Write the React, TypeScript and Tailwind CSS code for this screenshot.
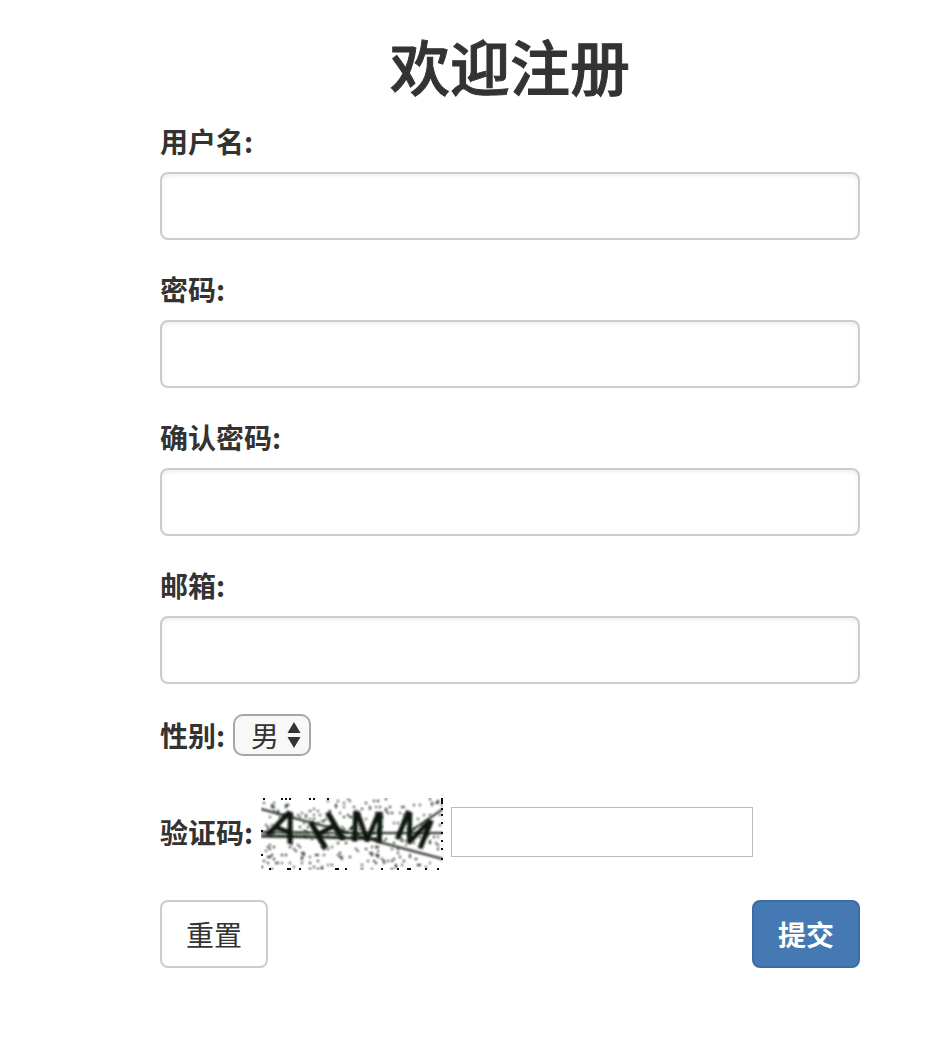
import React from "react";

interface FieldProps {
  id: string;
  label: string;
  type: string;
}

const Field: React.FC<FieldProps> = ({ id, label, type }) => {
  return (
    <div className="mb-[30px]">
      <label htmlFor={id} className="block mb-3 leading-[38px] font-bold">
        {label}
      </label>
      <input
        id={id}
        name={id}
        type={type}
        className="block w-full h-[68px] px-6 rounded-lg border-2 border-[#ccc] bg-white shadow-[inset_0_2px_4px_rgba(0,0,0,0.075)] outline-none focus:border-[#66afe9]"
      />
    </div>
  );
};

// fixed seed, so the speckles stay the same on every render
const makeSpeckles = (count: number) => {
  let seed = 4711;
  const next = () => {
    seed = (seed * 16807) % 2147483647;
    return seed / 2147483647;
  };
  return Array.from({ length: count }, () => ({
    x: Math.floor(next() * 91) * 2,
    y: Math.floor(next() * 36) * 2,
    opacity: 0.7 + next() * 0.3,
  }));
};

const speckles = makeSpeckles(270);
const topEdge = [2, 20, 24, 28, 48, 52, 66];
const bottomEdge = [8, 26, 28, 38, 74, 76, 84, 120, 136, 146, 148, 164, 176];
const rightEdge = [0, 2, 4, 10, 16, 24, 34, 42, 50, 60];

const Captcha = () => {
  return (
    <svg
      viewBox="0 0 182 72"
      className="w-[182px] h-[72px] shrink-0"
      role="img"
      aria-label="验证码"
    >
      <defs>
        <filter id="soft">
          <feGaussianBlur stdDeviation="0.8" />
        </filter>
        <filter id="softer">
          <feGaussianBlur stdDeviation="1.2" />
        </filter>
      </defs>
      <rect width="182" height="72" fill="#fff" />
      <g filter="url(#soft)" fill="#101a10">
        {speckles.map((s, i) => (
          <rect key={i} x={s.x} y={s.y} width="2" height="2" opacity={s.opacity} />
        ))}
      </g>
      <g filter="url(#soft)" stroke="#1c281c" fill="none">
        <path d="M0 11 L44 23 L90 35 L118 44 L182 61" strokeWidth="2" />
        <path d="M0 34 L80 35 L182 35" strokeWidth="2" />
        <path d="M0 38 L60 39 L118 41" strokeWidth="3" />
        <path d="M148 34 L166 22 L182 11" strokeWidth="2" />
      </g>
      <g
        filter="url(#softer)"
        className="font-['Liberation_Sans',sans-serif] text-[42px]"
        fill="#0c160c"
        stroke="#0c160c"
        strokeWidth="1.5"
        textAnchor="middle"
      >
        <text transform="translate(18 41) rotate(22)">A</text>
        <text transform="translate(73 45) rotate(-30)">H</text>
        <text transform="translate(106 43) rotate(2)">M</text>
        <text transform="translate(148 45) rotate(22)">M</text>
      </g>
      <g fill="#0a0f0a">
        {topEdge.map((x) => (
          <rect key={x} x={x} y="0" width="2" height="2" />
        ))}
        {bottomEdge.map((x) => (
          <rect key={x} x={x} y="70" width="2" height="2" />
        ))}
        {rightEdge.map((y) => (
          <rect key={y} x="180" y={y} width="2" height="2" />
        ))}
        <rect x="0" y="32" width="2" height="2" />
        <rect x="0" y="56" width="2" height="2" />
      </g>
    </svg>
  );
};

const App: React.FC = () => {
  return (
    <main className="bg-white pl-40 pr-[92px] pt-8 pb-20 font-['Noto_Sans_CJK_SC',sans-serif] text-[28px] leading-10 text-[#333]">
      <h1 className="mb-6 text-center text-[60px] leading-[66px] font-medium [-webkit-text-stroke:1px_#333]">
        欢迎注册
      </h1>
      <form onSubmit={(e) => e.preventDefault()}>
        <Field id="username" label="用户名:" type="text" />
        <Field id="password" label="密码:" type="password" />
        <Field id="confirm" label="确认密码:" type="password" />
        <Field id="email" label="邮箱:" type="email" />

        <div className="flex items-center gap-2 mb-[42px]">
          <label htmlFor="gender" className="font-bold">
            性别:
          </label>
          <div className="relative">
            <select
              id="gender"
              name="gender"
              className="block appearance-none w-[78px] h-[42px] pl-4 rounded-[10px] border-2 border-[#a6a6a6] bg-[#f8f8f8] leading-[38px]"
            >
              <option>男</option>
              <option>女</option>
            </select>
            <svg
              viewBox="0 0 14 26"
              className="absolute right-2.5 top-2 w-3.5 h-[26px] pointer-events-none"
              fill="#333"
            >
              <path d="M7 0 L13.5 11 H0.5 Z" />
              <path d="M7 26 L13.5 15 H0.5 Z" />
            </svg>
          </div>
        </div>

        <div className="flex items-center gap-2 mb-[30px]">
          <label htmlFor="code" className="mb-1 font-bold">
            验证码:
          </label>
          <Captcha />
          <input
            id="code"
            name="code"
            type="text"
            className="w-[302px] h-[50px] mb-1 px-1 border border-[#bbb] bg-white outline-none"
          />
        </div>

        <div className="flex justify-between">
          <button
            type="reset"
            className="h-[68px] px-6 rounded-lg border-2 border-[#ccc] bg-white"
          >
            重置
          </button>
          <button
            type="submit"
            className="h-[68px] px-6 rounded-lg border-2 border-[#3b6ca3] bg-[#4479b3] font-bold text-white"
          >
            提交
          </button>
        </div>
      </form>
    </main>
  );
};

export default App;
